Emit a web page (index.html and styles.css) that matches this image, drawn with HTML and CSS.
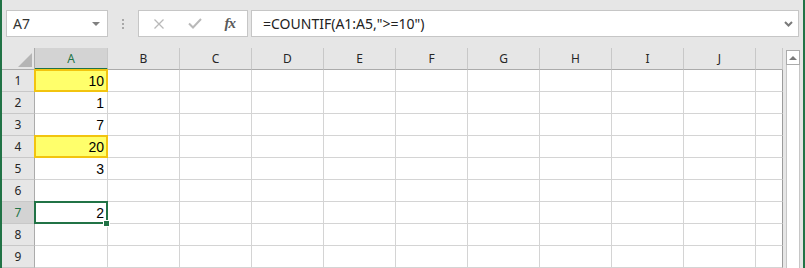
FILE: index.html
```html
<!DOCTYPE html>
<html lang="en">
<head>
  <meta charset="UTF-8">
  <title>COUNTIF</title>
  <link rel="stylesheet" href="styles.css">
</head>
<body>
  <div class="app">

    <div class="formula-bar">
      <div class="name-box">
        <span>A7</span>
        <span class="drop"></span>
      </div>
      <div class="grip"><i></i><i></i><i></i></div>
      <div class="fx-box">
        <svg class="ico" width="12" height="12" viewBox="0 0 12 12">
          <path d="M1.5 1.5 L10.5 10.5 M10.5 1.5 L1.5 10.5" stroke="#b9b9b9" stroke-width="1.3" fill="none"/>
        </svg>
        <svg class="ico" width="14" height="11" viewBox="0 0 14 11">
          <path d="M1 5.5 L5 9.5 L13 1" stroke="#b9b9b9" stroke-width="2" fill="none"/>
        </svg>
        <span class="fx">fx</span>
      </div>
      <div class="formula">
        <span>=COUNTIF(A1:A5,"&gt;=10")</span>
        <svg class="chev" width="9" height="6" viewBox="0 0 9 6">
          <path d="M1 1 L4.5 4.5 L8 1" stroke="#7a7a7a" stroke-width="2" fill="none"/>
        </svg>
      </div>
    </div>

    <div class="sheet-area">
      <div class="sheet" id="sheet">
        <div class="corner"><span class="tri"></span></div>
      </div>
      <div class="vscroll">
        <div class="up"><span></span></div>
        <div class="track"></div>
      </div>
    </div>

  </div>

  <script>
    const cols = ['A', 'B', 'C', 'D', 'E', 'F', 'G', 'H', 'I', 'J', ''];
    const values = { 1: '10', 2: '1', 3: '7', 4: '20', 5: '3', 7: '2' };
    const sheet = document.getElementById('sheet');

    function cell(cls, text) {
      const div = document.createElement('div');
      div.className = cls;
      div.textContent = text || '';
      sheet.appendChild(div);
      return div;
    }

    cols.forEach(c => {
      cell(c === 'A' ? 'col-head active' : 'col-head', c);
    });

    for (let r = 1; r <= 9; r++) {
      cell(r === 7 ? 'row-head active' : 'row-head', r);
      cols.forEach(c => {
        const div = cell('cell', c === 'A' ? values[r] : '');
        if (c === 'A' && (r === 1 || r === 4)) div.classList.add('mark');
        if (c === 'A' && r === 7) {
          div.classList.add('selected');
          div.innerHTML += '<span class="handle"></span>';
        }
      });
    }
  </script>
</body>
</html>
```

FILE: styles.css
```css
body {
  margin: 0;
  width: 805px;
  height: 268px;
  overflow: hidden;
  font-family: 'Noto Sans', sans-serif;
}

.app {
  height: 268px;
  background: #e6e6e6;
  border-left: 2px solid #217346;
  border-right: 2px solid #217346;
  display: flex;
  flex-direction: column;
}

/* formula bar */
.formula-bar {
  height: 48px;
  box-sizing: border-box;
  padding: 10px 0 0 4px;
  display: flex;
  align-items: flex-start;
}

.name-box, .fx-box, .formula {
  height: 27px;
  box-sizing: border-box;
  background: #fff;
  border: 1px solid #c6c6c6;
  display: flex;
  align-items: center;
}

.name-box {
  width: 102px;
  padding: 0 6px 0 6px;
  justify-content: space-between;
  font-size: 14px;
  color: #333;
}

.drop {
  width: 0;
  height: 0;
  border-left: 4px solid transparent;
  border-right: 4px solid transparent;
  border-top: 4px solid #808080;
  margin-right: 1px;
}

.grip {
  width: 30px;
  height: 27px;
  display: flex;
  flex-direction: column;
  align-items: center;
  justify-content: center;
  gap: 2px;
}

.grip i {
  width: 2px;
  height: 2px;
  background: #a8a8a8;
}

.fx-box {
  width: 110px;
  padding: 0 10px 0 14px;
  justify-content: space-between;
}

.fx {
  font-family: 'Liberation Serif', serif;
  font-style: italic;
  font-weight: bold;
  font-size: 15px;
  color: #5a5a5a;
  letter-spacing: -1px;
  padding-right: 2px;
}

.formula {
  width: 548px;
  margin-left: 3px;
  padding: 0 5px 0 11px;
  justify-content: space-between;
  font-size: 14px;
  color: #222;
}

.chev {
  margin-top: 1px;
}

/* sheet */
.sheet-area {
  display: flex;
  flex: 1;
}

.sheet {
  display: grid;
  grid-template-columns: 33px 73px repeat(9, 72px) 27px;
  grid-auto-rows: 22px;
  font-size: 12px;
}

.sheet > div {
  box-sizing: border-box;
  border-right: 1px solid #d4d4d4;
  border-bottom: 1px solid #d4d4d4;
}

.corner {
  position: relative;
  background: #e6e6e6;
  border-right-color: #ababab !important;
  border-bottom-color: #ababab !important;
}

.tri {
  position: absolute;
  right: 2px;
  bottom: 2px;
  width: 0;
  height: 0;
  border-left: 14px solid transparent;
  border-bottom: 14px solid #b5b5b5;
}

.col-head, .row-head {
  background: #e6e6e6;
  color: #262626;
  display: flex;
  align-items: center;
  justify-content: center;
}

.col-head {
  border-right-color: #c8c8c8 !important;
  border-bottom-color: #ababab !important;
}

.row-head {
  border-right-color: #ababab !important;
  border-bottom-color: #c8c8c8 !important;
}

.col-head.active {
  background: #d3d3d3;
  color: #217346;
  border-bottom: 2px solid #217346 !important;
}

.row-head.active {
  background: #d3d3d3;
  color: #217346;
}

.cell {
  background: #fff;
  position: relative;
  text-align: right;
  padding-right: 3px;
  font-family: 'Liberation Sans', sans-serif;
  font-size: 14px;
  line-height: 22px;
  color: #000;
}

.sheet > .cell:nth-child(12n) {
  border-right-color: #9b9b9b;
}

.cell.mark {
  background: #ffff6b;
}

.cell.mark::before {
  content: '';
  position: absolute;
  top: -1px;
  left: -1px;
  right: -1px;
  bottom: -1px;
  border: 2px solid #f2c40f;
}

.cell.selected::before {
  content: '';
  position: absolute;
  top: -1px;
  left: -1px;
  right: -1px;
  bottom: -1px;
  border: 2px solid #217346;
}

.handle {
  position: absolute;
  right: -2px;
  bottom: -3px;
  width: 5px;
  height: 5px;
  background: #217346;
  box-shadow: 0 0 0 1px #fff;
  z-index: 2;
}

/* scroll bar */
.vscroll {
  width: 14px;
  margin-left: 3px;
  padding-top: 2px;
  display: flex;
  flex-direction: column;
}

.up {
  height: 15px;
  box-sizing: border-box;
  background: #fff;
  border: 1px solid #ababab;
  display: flex;
  align-items: center;
  justify-content: center;
}

.up span {
  width: 0;
  height: 0;
  border-left: 4px solid transparent;
  border-right: 4px solid transparent;
  border-bottom: 4px solid #7a7a7a;
}

.track {
  flex: 1;
  background: #fff;
  border-left: 1px solid #c6c6c6;
  border-right: 1px solid #c6c6c6;
}
```
